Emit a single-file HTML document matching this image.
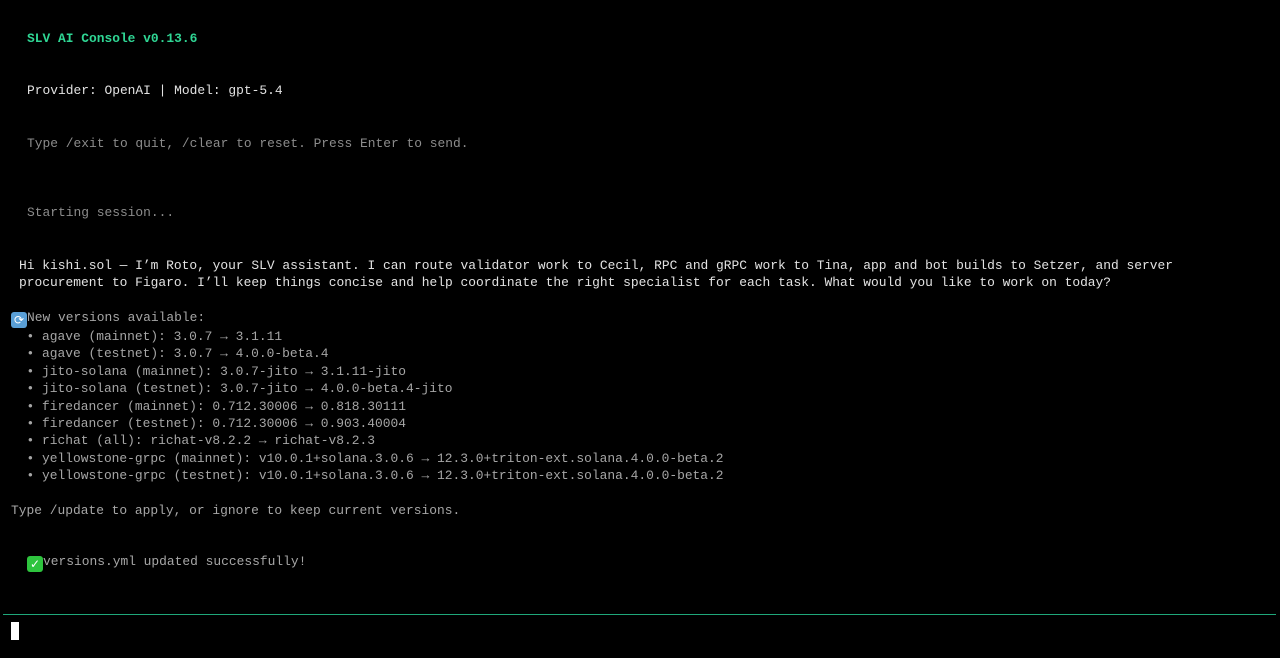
<!DOCTYPE html>
<html><head><meta charset="utf-8"><style>
html,body{margin:0;padding:0;background:#000;width:1280px;height:658px;overflow:hidden}
body{font-family:"Liberation Mono","DejaVu Sans Mono",monospace;font-size:12.92px;line-height:17.4px;color:#e2e2e2;position:relative}
.l{position:absolute;white-space:pre}
.g{color:#8c8c8c}
.gl{color:#a6a6a6}
.t{color:#2fd694;font-weight:bold}
.e{display:inline-block;width:16px;height:16px;border-radius:3px;vertical-align:-3px;text-align:center;line-height:16px;font-size:12px;color:#fff;font-family:"DejaVu Sans",sans-serif}
</style></head><body>
<div class="l t" style="left:27px;top:30px">SLV AI Console v0.13.6</div>
<div class="l" style="left:27px;top:82px">Provider: OpenAI | Model: gpt-5.4</div>
<div class="l g" style="left:27px;top:135px">Type /exit to quit, /clear to reset. Press Enter to send.</div>
<div class="l g" style="left:27px;top:204px">Starting session...</div>
<div class="l" style="left:19px;top:257px">Hi kishi.sol — I’m Roto, your SLV assistant. I can route validator work to Cecil, RPC and gRPC work to Tina, app and bot builds to Setzer, and server
procurement to Figaro. I’ll keep things concise and help coordinate the right specialist for each task. What would you like to work on today?</div>
<div class="l gl" style="left:11px;top:309px"><span class="e" style="background:#5a9fd6">⟳</span>New versions available:
  • agave (mainnet): 3.0.7 → 3.1.11
  • agave (testnet): 3.0.7 → 4.0.0-beta.4
  • jito-solana (mainnet): 3.0.7-jito → 3.1.11-jito
  • jito-solana (testnet): 3.0.7-jito → 4.0.0-beta.4-jito
  • firedancer (mainnet): 0.712.30006 → 0.818.30111
  • firedancer (testnet): 0.712.30006 → 0.903.40004
  • richat (all): richat-v8.2.2 → richat-v8.2.3
  • yellowstone-grpc (mainnet): v10.0.1+solana.3.0.6 → 12.3.0+triton-ext.solana.4.0.0-beta.2
  • yellowstone-grpc (testnet): v10.0.1+solana.3.0.6 → 12.3.0+triton-ext.solana.4.0.0-beta.2

Type /update to apply, or ignore to keep current versions.</div>
<div class="l gl" style="left:27px;top:553px"><span class="e" style="background:#2ec43e">✓</span>versions.yml updated successfully!</div>
<div style="position:absolute;left:3px;right:4px;top:614px;height:1px;background:#1fa77a"></div>
<div style="position:absolute;left:11px;top:622px;width:8px;height:18px;background:#fff"></div>
</body></html>
